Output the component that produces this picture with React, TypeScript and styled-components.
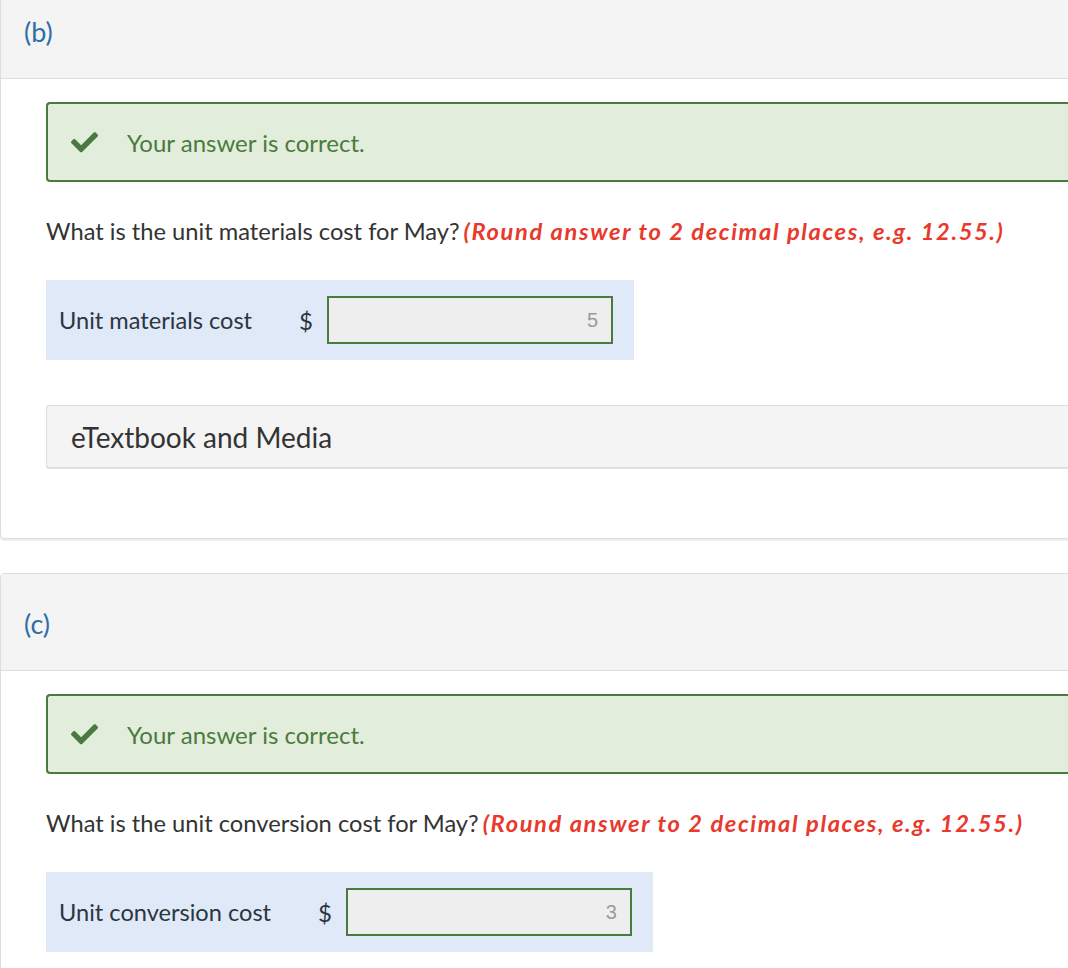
import styled, { createGlobalStyle } from "styled-components";

const GlobalStyle = createGlobalStyle`
  html, body {
    margin: 0;
    padding: 0;
    background: #ffffff;
    overflow: hidden;
  }
  body {
    font-family: Lato, "Open Sans", "Liberation Sans", sans-serif;
    color: #333333;
  }
`;

const Page = styled.div`
  width: 1110px;
  margin-top: -19px;
  display: flex;
  flex-direction: column;
  gap: 34px;
`;

const Card = styled.section`
  border: 1px solid #dddddd;
  border-radius: 4px;
  background: #ffffff;
  box-shadow: 0 2px 0 #eeeeee;
  overflow: hidden;
`;

const CardHeader = styled.div`
  height: 97px;
  box-sizing: border-box;
  padding: 14px 23px 12px;
  display: flex;
  align-items: center;
  background: #f4f4f4;
  border-bottom: 1px solid #dddddd;
  color: #2f6ea6;
  font-size: 27px;
`;

const CardBody = styled.div`
  padding: 23px 0 70px 45px;
  display: flex;
  flex-direction: column;
  align-items: flex-start;
`;

const Feedback = styled.div`
  align-self: stretch;
  height: 80px;
  box-sizing: border-box;
  display: flex;
  align-items: center;
  gap: 29px;
  padding-left: 23px;
  background: #e2eedb;
  border: 2px solid #4a7a3f;
  border-right: none;
  border-radius: 4px 0 0 4px;
  color: #4a7a3f;
  font-size: 24px;
`;

const Question = styled.p`
  margin: 35px 0 0;
  font-size: 23.7px;
  line-height: 28px;
  color: #333333;
`;

const Hint = styled.span`
  color: #e8392c;
  font-weight: 700;
  font-style: italic;
  letter-spacing: 1.6px;
  margin-left: 4px;
`;

const AnswerRow = styled.div`
  margin-top: 35px;
  height: 80px;
  box-sizing: border-box;
  display: inline-flex;
  align-items: center;
  padding: 0 21px 0 13px;
  background: #dfe9f7;
`;

const Label = styled.span`
  font-size: 23.6px;
  color: #2b3640;
`;

const Currency = styled.span`
  margin-left: 47px;
  margin-right: 14px;
  font-size: 24px;
  color: #2b3640;
`;

const AnswerBox = styled.div`
  width: 286px;
  height: 48px;
  box-sizing: border-box;
  border: 2px solid #4a7a3f;
  background: #eeeeee;
  display: flex;
  align-items: center;
  justify-content: flex-end;
  padding-right: 13px;
  font-family: "Liberation Sans", Arial, sans-serif;
  font-size: 20px;
  color: #9a9a9a;
`;

const MediaBar = styled.div`
  align-self: stretch;
  margin-top: 45px;
  height: 63px;
  box-sizing: border-box;
  display: flex;
  align-items: center;
  padding-left: 24px;
  background: #f4f4f4;
  border: 1px solid #dddddd;
  border-right: none;
  border-radius: 3px 0 0 3px;
  box-shadow: 0 1px 0 #e4e4e4;
  font-size: 28px;
  color: #333333;
`;

const CheckIcon = () => (
  <svg width="27" height="21" viewBox="0 0 512 380" aria-hidden="true">
    <path
      fill="#4a7a3f"
      d="M173.9 369.4L7.5 203c-10-10-10-26.2 0-36.2l36.2-36.2c10-10 26.2-10 36.2 0L192 242.7 432.1 2.6c10-10 26.2-10 36.2 0l36.2 36.2c10 10 10 26.2 0 36.2L210.1 369.4c-10 10-26.2 10-36.2 0z"
    />
  </svg>
);

type PartProps = {
  letter: string;
  subject: string;
  label: string;
  value: string;
  showMedia?: boolean;
};

const Part = ({ letter, subject, label, value, showMedia }: PartProps) => (
  <Card>
    <CardHeader>({letter})</CardHeader>
    <CardBody>
      <Feedback>
        <CheckIcon />
        <span>Your answer is correct.</span>
      </Feedback>
      <Question>
        What is the unit {subject} cost for May?
        <Hint>(Round answer to 2 decimal places, e.g. 12.55.)</Hint>
      </Question>
      <AnswerRow>
        <Label>{label}</Label>
        <Currency>$</Currency>
        <AnswerBox>{value}</AnswerBox>
      </AnswerRow>
      {showMedia && <MediaBar>eTextbook and Media</MediaBar>}
    </CardBody>
  </Card>
);

export default function App() {
  return (
    <>
      <GlobalStyle />
      <Page>
        <Part
          letter="b"
          subject="materials"
          label="Unit materials cost"
          value="5"
          showMedia
        />
        <Part
          letter="c"
          subject="conversion"
          label="Unit conversion cost"
          value="3"
          showMedia
        />
      </Page>
    </>
  );
}
